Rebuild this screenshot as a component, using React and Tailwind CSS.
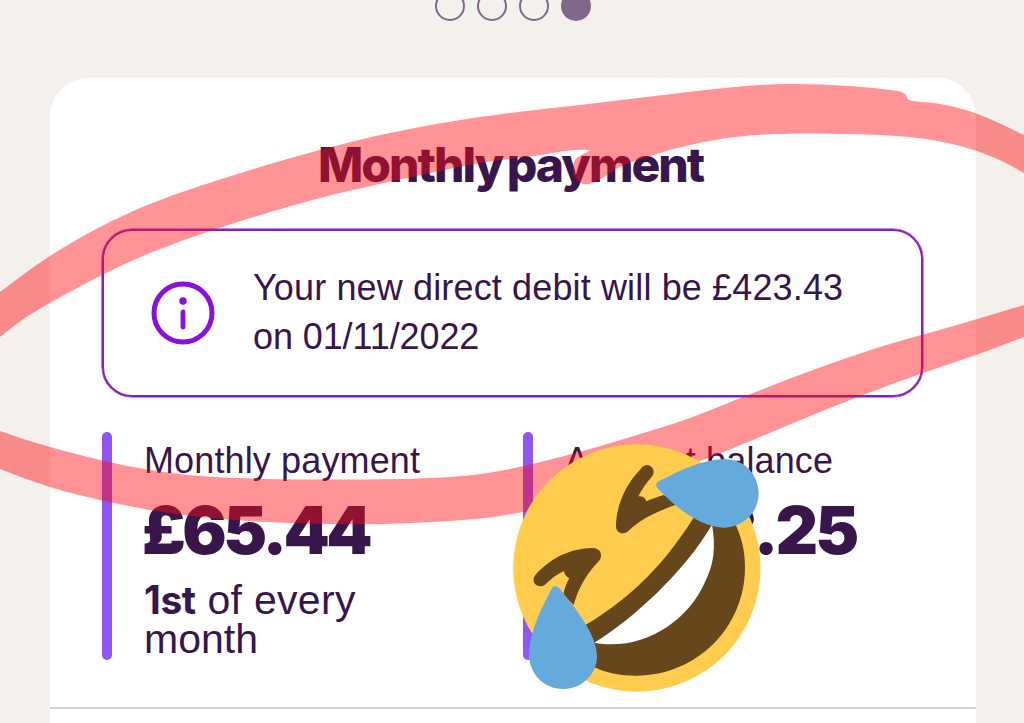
import React from 'react';

// Marker outlines, traced clockwise
const upperStroke = [
  [-30, 316], [0, 292], [50, 256], [100, 227], [150, 204], [200, 186], [260, 167], [320, 150], [390, 133],
  [480, 117], [580, 105], [680, 93], [740, 86.5], [790, 84], [850, 86], [898, 91], [905, 94], [909, 100],
  [940, 104], [975, 113], [1024, 135], [1050, 148], [1050, 190], [1024, 173], [995, 158], [960, 146],
  [910, 137], [840, 134], [780, 134], [735, 137], [690, 145], [650, 156], [620, 167], [597, 181], [583, 184],
  [574, 174], [575, 160], [588, 150], [533, 156], [480, 163], [430, 173], [375, 185], [320, 198],
  [267, 213], [210, 231], [150, 253], [100, 276], [50, 303], [25, 318], [0, 337], [-30, 362],
];

const lowerStroke = [
  [-30, 418], [0, 431], [50, 447], [100, 460], [150, 470], [200, 476], [267, 479], [333, 479.5], [400, 479],
  [450, 477], [500, 471], [583, 451], [653, 430], [690, 418], [753, 393], [813, 370], [880, 347], [950, 327],
  [1024, 305], [1050, 297], [1050, 328], [1024, 337], [976, 355], [923, 373], [863, 395],
  [803, 419], [743, 444], [700, 461], [620, 487], [560, 504], [500, 516], [450, 521], [383, 524], [333, 524],
  [267, 522], [200, 517], [150, 510], [100, 500], [50, 487], [0, 469], [-30, 456],
];

const smooth = (pts) => {
  const n = pts.length;
  let d = `M${pts[0][0]} ${pts[0][1]}`;
  for (let i = 0; i < n; i++) {
    const p0 = pts[(i - 1 + n) % n];
    const p1 = pts[i];
    const p2 = pts[(i + 1) % n];
    const p3 = pts[(i + 2) % n];
    const len = Math.hypot(p2[0] - p1[0], p2[1] - p1[1]);
    const a = Math.hypot(p2[0] - p0[0], p2[1] - p0[1]) || 1;
    const b = Math.hypot(p3[0] - p1[0], p3[1] - p1[1]) || 1;
    const k = len / 3;
    d += `C${p1[0] + ((p2[0] - p0[0]) / a) * k} ${p1[1] + ((p2[1] - p0[1]) / a) * k} ${p2[0] - ((p3[0] - p1[0]) / b) * k} ${p2[1] - ((p3[1] - p1[1]) / b) * k} ${p2[0]} ${p2[1]}`;
  }
  return d + 'Z';
};

const Marker = () => (
  <svg className="absolute inset-0 pointer-events-none" width="1024" height="723" viewBox="0 0 1024 723">
    <g fill="#ff0c0f" opacity="0.445">
      <path d={smooth(upperStroke)} />
      <path d={smooth(lowerStroke)} />
    </g>
  </svg>
);

const LaughingFace = () => (
  <svg className="absolute left-[500px] top-[430px]" width="270" height="280" viewBox="0 0 810 840">
    <circle cx="410.500" cy="414" r="371" fill="#ffcc4d" />
    <g fill="#65471b">
      <path d="M600 232C500 400 390 510 230 601L270 705C315 730 362 737 410 737C590 737 735 592 735 412C735 360 725 320 700 270Z" />
      <path d="M106 435C148 388 208 354 280 354C302 355 310 377 297 393C258 432 234 478 221 525L190 494C194 474 200 458 208 445C198 440 193 432 192 423C172 432 155 445 135 464C115 479 89 456 106 435Z" />
      <path d="M422 117C372 168 348 235 348 288C348 310 370 316 385 303C426 264 478 241 532 223L492 195C473 200 456 207 439 214C436 203 428 199 415 199C425 178 440 158 457 138C472 115 440 90 422 117Z" />
    </g>
    <path d="M283 638C400 565 550 430 636 284C648 350 642 405 614 458C560 580 420 665 283 638Z" fill="#fff" />
    <g fill="#64aadd">
      <path d="M469 166C468 159 475 155 482 151C550 117 605 90 670 87C735 86 775 135 776 190C776 248 730 292 670 293C600 290 530 235 475 177C472 174 469 170 469 166Z" />
      <path d="M164 469C159 469 156 474 153 480C110 560 88 620 87 672C87 730 130 777 190 777C250 776 291 730 291 678C289 612 230 540 178 475C174 470 169 468 164 469Z" />
    </g>
  </svg>
);

const InfoIcon = () => (
  <svg width="64" height="64" viewBox="0 0 64 64" fill="none" className="shrink-0">
    <circle cx="32" cy="32" r="29" stroke="#8b10e0" strokeWidth="5" />
    <circle cx="32" cy="20" r="3.700" fill="#8b10e0" />
    <path d="M32 31V46" stroke="#8b10e0" strokeWidth="4.800" strokeLinecap="round" />
  </svg>
);

const Stat = ({ children }) => (
  <div className="flex w-[421px] h-[228px]">
    <div className="w-[10px] h-full rounded-full bg-[#9155f5] shrink-0" />
    <div className="pl-[32px] pt-[7px] whitespace-nowrap">{children}</div>
  </div>
);

const App = () => {
  return (
    <div className="relative w-[1024px] h-[723px] overflow-hidden bg-[#f4f0ec] text-[#38164b] font-['Liberation_Sans',Arial,sans-serif]">
      {/* Pager dots */}
      <div className="flex justify-center gap-[12px] -mt-[9px] h-[87px] pl-px">
        <span className="w-[30px] h-[30px] rounded-full border-2 border-[#806888]" />
        <span className="w-[30px] h-[30px] rounded-full border-2 border-[#806888]" />
        <span className="w-[30px] h-[30px] rounded-full border-2 border-[#806888]" />
        <span className="w-[30px] h-[30px] rounded-full bg-[#806888]" />
      </div>

      <div className="ml-[50px] w-[926px] h-[700px] rounded-t-[38px] bg-white pt-[55px]">
        <h1 className="h-[96px] pr-[5px] text-center text-[48px] leading-[64px] font-extrabold tracking-[-2px] [word-spacing:-4px] font-['Inter',sans-serif]">
          Monthly payment
        </h1>

        <div className="ml-[52px] w-[821px] h-[168px] rounded-[30px] border-2 border-[#8420c8] shadow-[0_0_0_0.5px_#8420c8] flex items-center pl-[47px] gap-[38px]">
          <InfoIcon />
          <p className="text-[36px] leading-[49px] whitespace-nowrap -mt-[2px]">
            <span className="tracking-[0.14px]">Your new direct debit will be £423.43</span>
            <br />
            <span className="tracking-[-0.1px]">on 01/11/2022</span>
          </p>
        </div>

        <div className="flex mt-[35px] ml-[52px]">
          <Stat>
            <p className="text-[36px] leading-[44px] tracking-[0.13px]">Monthly payment</p>
            <p className="mt-[12px] -ml-[2px] text-[66px] leading-[70px] font-black tracking-[-3.5px] font-['Inter',sans-serif]">£65.44</p>
            <div className="mt-[15px] text-[41px] leading-[39px]">
              <p className="tracking-[0.3px]"><b className="font-['Inter',sans-serif] text-[39px] font-bold tracking-[-0.4px]">1st</b> of every</p>
              <p>month</p>
            </div>
          </Stat>
          <Stat>
            <p className="text-[36px] leading-[44px] tracking-[0.13px]">Account balance</p>
            <p className="mt-[12px] text-[66px] leading-[70px] font-black tracking-[-2.9px] font-['Inter',sans-serif]">-£223.25</p>
          </Stat>
        </div>

        <div className="mt-[47px] h-[2px] bg-[#d6d0d8]" />
      </div>

      <Marker />
      <LaughingFace />
    </div>
  );
};

export default App;
